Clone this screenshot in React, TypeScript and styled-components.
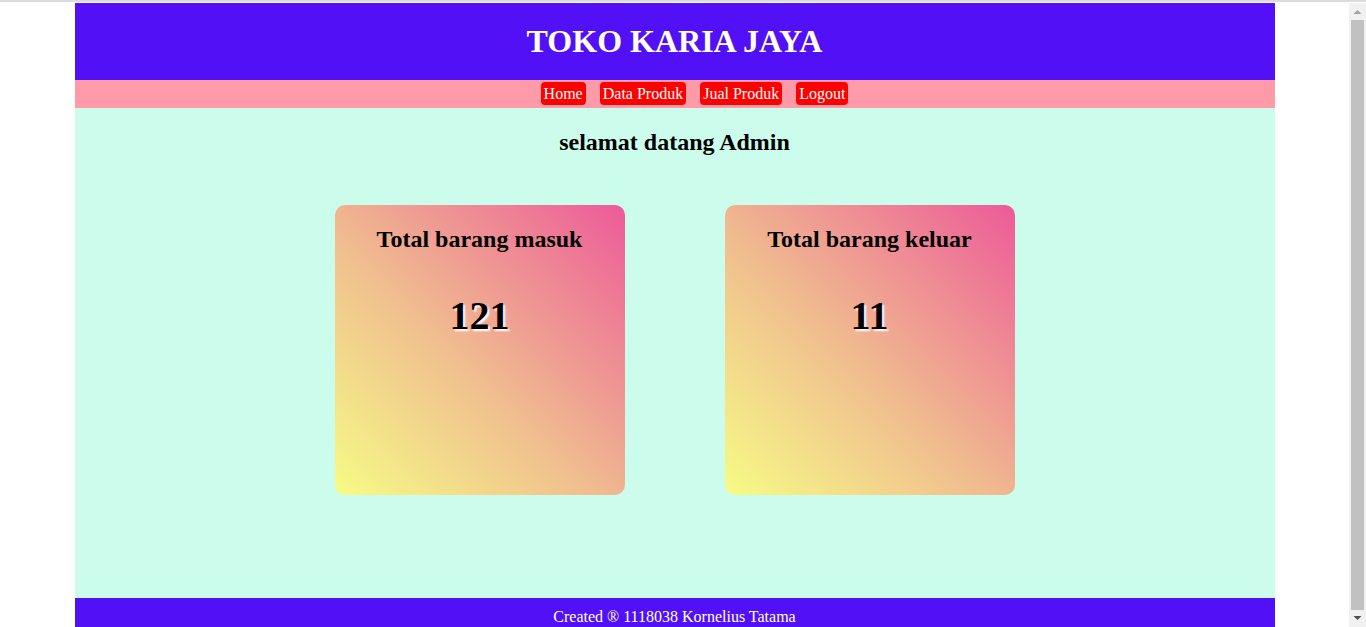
import React from 'react'
import styled, { createGlobalStyle } from 'styled-components'

const GlobalStyle = createGlobalStyle`
html {
  border-top: 2px solid #dcdcdc;
}
body {
  margin: 0;
  padding-top: 1px;
  padding-right: 17px;
  background: #ffffff;
  font-family: "Liberation Serif", "Times New Roman", serif;
}
`

interface CardProps {
  title: string;
  total: number;
}

const menu = ['Home', 'Data Produk', 'Jual Produk', 'Logout']

const StatCard: React.FC<CardProps> = ({ title, total }) => {
  return (
    <Card>
      <CardTitle>{title}</CardTitle>
      <CardNumber>{total}</CardNumber>
    </Card>
  )
}

// fake window scrollbar, the page in the shot is a bit taller than the window
const ScrollBar: React.FC = () => (
  <Track>
    <Arrow viewBox="0 0 17 17" width="17" height="17">
      <path d="M4.5 11 L8.5 7 L12.5 11 Z" fill="#a3a3a3" />
    </Arrow>
    <Thumb />
    <Arrow viewBox="0 0 17 17" width="17" height="17">
      <path d="M4.5 6 L8.5 10 L12.5 6 Z" fill="#505050" />
    </Arrow>
  </Track>
)

const App: React.FC = () => {
  return (
    <>
      <GlobalStyle />
      <Container>
        <Header>
          <h1>TOKO KARIA JAYA</h1>
        </Header>

        <Nav>
          {menu.map(item => (
            <NavButton key={item} href="#">{item}</NavButton>
          ))}
        </Nav>

        <Main>
          <Welcome>selamat datang Admin</Welcome>
          <CardRow>
            <StatCard title="Total barang masuk" total={121} />
            <StatCard title="Total barang keluar" total={11} />
          </CardRow>
        </Main>

        <Footer>Created ® 1118038 Kornelius Tatama</Footer>
      </Container>
      <ScrollBar />
    </>
  )
}

export default App



const Container = styled.div`
width: 1200px;
margin: 0 auto;
`

const Header = styled.header`
background-color: #5210f6;
color: white;
text-align: center;
padding: 20px 0;

h1 {
  margin: 0;
  font-size: 32px;
  line-height: 37px;
  font-weight: bold;
}
`

const Nav = styled.nav`
background-color: #ff9aa9;
display: flex;
justify-content: center;
gap: 14px;
padding: 2px 0 3px 40px; // like a list's indent
`

const NavButton = styled.a`
background-color: #ff0000;
color: white;
text-decoration: none;
font-size: 16px;
line-height: 19px;
padding: 2px 3px;
border-radius: 4px;
`

const Main = styled.main`
background-color: #ccfdec;
padding: 20px 0 103px;
`

const Welcome = styled.h2`
margin: 0;
text-align: center;
font-size: 24px;
line-height: 28px;
font-weight: bold;
`

const CardRow = styled.div`
display: flex;
justify-content: center;
gap: 100px;
margin-top: 49px;
`

const Card = styled.div`
width: 290px;
height: 290px;
box-sizing: border-box;
padding-top: 20px;
border-radius: 10px;
background: linear-gradient(45deg, #f6fc86 0%, #f0bd8f 45%, #ed5a99 100%);
text-align: center;
`

const CardTitle = styled.h3`
margin: 0;
font-size: 24px;
line-height: 28px;
font-weight: bold;
`

const CardNumber = styled.div`
margin-top: 40px;
font-size: 40px;
line-height: 46px;
font-weight: bold;
text-shadow: 2px 2px 2px #ffffff;
`

const Footer = styled.footer`
background-color: #5210f6;
color: white;
text-align: center;
font-size: 16px;
line-height: 18px;
padding: 10px 0;
`

const Track = styled.div`
position: fixed;
top: 3px;
right: 0;
bottom: 0;
width: 17px;
background: #f1f1f1;
display: flex;
flex-direction: column;
`

const Arrow = styled.svg`
display: block;
flex: none;
`

const Thumb = styled.div`
flex: 1;
margin: 0 2px;
background: #c1c1c1;
`
